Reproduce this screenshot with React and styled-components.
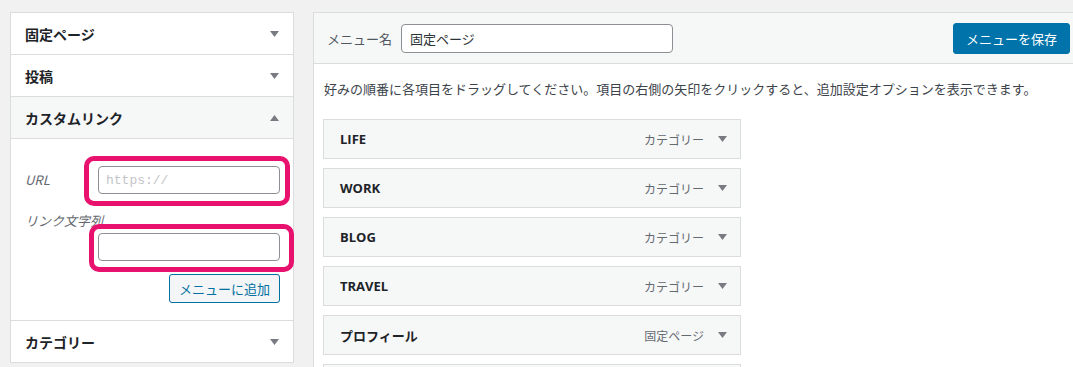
import styled, { createGlobalStyle } from "styled-components"

const GlobalStyle = createGlobalStyle`
body {
  margin: 0;
  background: #f1f1f1;
  font-family: "Open Sans", "Noto Sans CJK JP", sans-serif;
  color: #1d2327;
  overflow: hidden;
}
`

const Arrow = ({ up }) => (
  <svg width="9" height="6" viewBox="0 0 9 6">
    <polygon points={up ? "0,6 9,6 4.5,0" : "0,0 9,0 4.5,6"} fill="#787c82" />
  </svg>
)

const leftSections = [
  { title: "固定ページ" },
  { title: "投稿" },
  { title: "カスタムリンク", open: true },
  { title: "カテゴリー" },
]

// the last row only shows its top edge in the frame
const menuItems = [
  { title: "LIFE", type: "カテゴリー" },
  { title: "WORK", type: "カテゴリー" },
  { title: "BLOG", type: "カテゴリー" },
  { title: "TRAVEL", type: "カテゴリー" },
  { title: "プロフィール", type: "固定ページ" },
  { title: "", type: "" },
]

const CustomLinkBody = () => (
  <LinkBody>
    <UrlRow>
      <FieldLabel>URL</FieldLabel>
      <FieldWrap>
        <TextInput placeholder="https://" mono />
        <Highlight $top={-10} $right={-10} $bottom={-12} $left={-14} />
      </FieldWrap>
    </UrlRow>
    <FieldLabel $block>リンク文字列</FieldLabel>
    <FieldWrap $alignRight>
      <TextInput />
      <Highlight $top={-9} $right={-14} $bottom={-11} $left={-9} />
    </FieldWrap>
    <ButtonRow>
      <SecondaryButton>メニューに追加</SecondaryButton>
    </ButtonRow>
  </LinkBody>
)

const App = () => {
  return (
    <>
      <GlobalStyle />
      <Page>
        <LeftPanel>
          {leftSections.map((s) => (
            <Section key={s.title}>
              <SectionHeader $open={s.open}>
                <span>{s.title}</span>
                <Arrow up={s.open} />
              </SectionHeader>
              {s.open && <CustomLinkBody />}
            </Section>
          ))}
        </LeftPanel>
        <RightPanel>
          <MenuHeader>
            <HeaderLabel>メニュー名</HeaderLabel>
            <NameInput defaultValue="固定ページ" />
            <PrimaryButton>メニューを保存</PrimaryButton>
          </MenuHeader>
          <MenuBody>
            <Description>
              好みの順番に各項目をドラッグしてください。項目の右側の矢印をクリックすると、追加設定オプションを表示できます。
            </Description>
            <ItemList>
              {menuItems.map((item, i) => (
                <Item key={i}>
                  <ItemTitle>{item.title}</ItemTitle>
                  {item.type && (
                    <ItemMeta>
                      <ItemType>{item.type}</ItemType>
                      <Arrow />
                    </ItemMeta>
                  )}
                </Item>
              ))}
            </ItemList>
          </MenuBody>
        </RightPanel>
      </Page>
    </>
  )
}
export default App

const Page = styled.div`
display: flex;
align-items: flex-start;
gap: 19px;
padding: 12px 0 0 10px;
height: 355px;
overflow: hidden;
`
const LeftPanel = styled.div`
width: 284px;
flex-shrink: 0;
box-sizing: border-box;
background: #fff;
border: 1px solid #dcdcde;
`
const Section = styled.div`
& + & {
  border-top: 1px solid #dcdcde;
}
`
const SectionHeader = styled.div`
height: 41px;
display: flex;
align-items: center;
justify-content: space-between;
padding: 0 14px;
font-family: "Noto Sans CJK JP", sans-serif;
font-size: 14px;
font-weight: 700;
color: #1d2327;
background: ${(p) => (p.$open ? "#f6f7f7" : "#fff")};
border-bottom: ${(p) => (p.$open ? "1px solid #dcdcde" : "none")};
`
const LinkBody = styled.div`
padding: 27px 13px 17px 14px;
display: flex;
flex-direction: column;
`
const UrlRow = styled.div`
display: flex;
align-items: center;
justify-content: space-between;
`
const FieldLabel = styled.div`
font-family: "Noto Sans CJK JP", sans-serif;
font-style: italic;
font-size: 13px;
line-height: 20px;
color: #646970;
margin-top: ${(p) => (p.$block ? "17px" : "0")};
`
const FieldWrap = styled.div`
position: relative;
width: 182px;
height: 28px;
margin-top: ${(p) => (p.$alignRight ? "2px" : "0")};
align-self: flex-end;
`
const TextInput = styled.input`
width: 100%;
height: 100%;
box-sizing: border-box;
border: 1px solid #8c8f94;
border-radius: 4px;
background: #fff;
padding: 0 7px;
font-family: ${(p) => (p.mono ? '"Liberation Mono", monospace' : '"Noto Sans CJK JP", sans-serif')};
font-size: 13px;
&::placeholder {
  color: #c3c4c7;
}
`
const Highlight = styled.div`
position: absolute;
top: ${(p) => p.$top}px;
right: ${(p) => p.$right}px;
bottom: ${(p) => p.$bottom}px;
left: ${(p) => p.$left}px;
border: 5px solid #e8126e;
border-radius: 10px;
pointer-events: none;
`
const ButtonRow = styled.div`
display: flex;
justify-content: flex-end;
margin-top: 13px;
`
const SecondaryButton = styled.button`
height: 29px;
padding: 0 9px;
box-sizing: border-box;
border: 1px solid #0071a1;
border-radius: 3px;
background: #f3f5f6;
color: #0071a1;
font-family: "Noto Sans CJK JP", sans-serif;
font-size: 13px;
line-height: 1;
`
const RightPanel = styled.div`
width: 770px;
flex-shrink: 0;
box-sizing: border-box;
background: #fff;
border: 1px solid #dcdcde;
height: 400px;
`
const MenuHeader = styled.div`
height: 50px;
display: flex;
align-items: center;
padding: 0 12px 0 13px;
background: #f6f7f7;
border-bottom: 1px solid #dcdcde;
`
const HeaderLabel = styled.span`
font-family: "Noto Sans CJK JP", sans-serif;
font-size: 13px;
color: #50575e;
`
const NameInput = styled.input`
margin-left: 9px;
width: 272px;
height: 29px;
box-sizing: border-box;
border: 1px solid #8c8f94;
border-radius: 4px;
background: #fff;
padding: 0 8px;
font-family: "Noto Sans CJK JP", sans-serif;
font-size: 13px;
color: #2c3338;
`
const PrimaryButton = styled.button`
margin-left: auto;
height: 31px;
padding: 0 12px;
border: 1px solid #0073aa;
border-radius: 3px;
background: #0073aa;
color: #fff;
font-family: "Noto Sans CJK JP", sans-serif;
font-size: 13px;
`
const MenuBody = styled.div`
padding: 16px 0 0 9px;
`
const Description = styled.p`
margin: 0 0 0 1px;
font-family: "Noto Sans CJK JP", sans-serif;
font-size: 13px;
line-height: 18px;
color: #3c434a;
`
const ItemList = styled.div`
margin-top: 21px;
display: flex;
flex-direction: column;
gap: 9px;
`
const Item = styled.div`
width: 418px;
height: 40px;
box-sizing: border-box;
display: flex;
align-items: center;
justify-content: space-between;
padding: 0 13px 0 16px;
background: #f6f7f7;
border: 1px solid #dcdcde;
`
const ItemTitle = styled.span`
font-family: "Open Sans", "Noto Sans CJK JP", sans-serif;
font-size: 13px;
font-weight: 700;
color: #1d2327;
`
const ItemMeta = styled.div`
display: flex;
align-items: center;
gap: 14px;
`
const ItemType = styled.span`
font-family: "Noto Sans CJK JP", sans-serif;
font-size: 12px;
color: #646970;
`
